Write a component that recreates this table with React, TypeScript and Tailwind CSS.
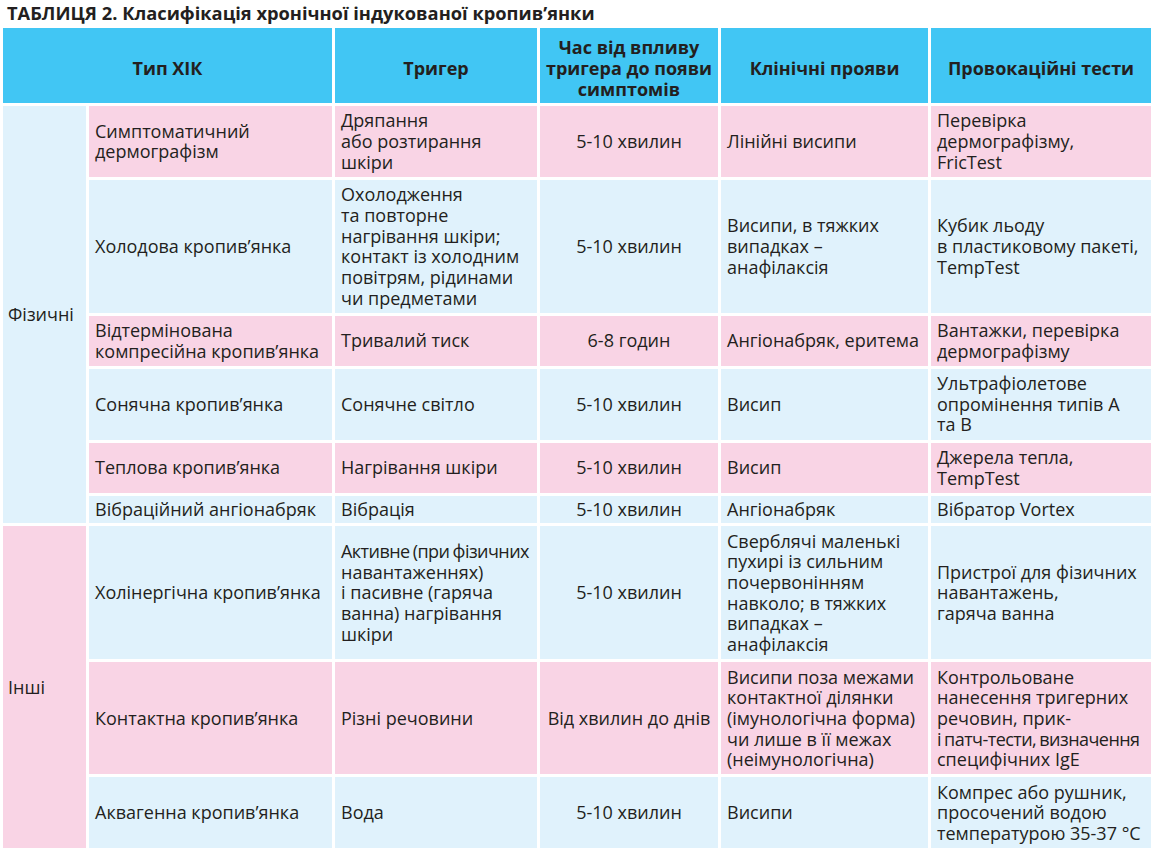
import React from "react";

type Row = { bg: "pink" | "blue"; cells: string[]; tight?: boolean };

const rows: Row[] = [
  { bg: "pink", cells: ["Симптоматичний\nдермографізм", "Дряпання\nабо розтирання\nшкіри", "5-10 хвилин", "Лінійні висипи", "Перевірка\nдермографізму,\nFricTest"] },
  { bg: "blue", cells: ["Холодова кропив’янка", "Охолодження\nта повторне\nнагрівання шкіри;\nконтакт із холодним\nповітрям, рідинами\nчи предметами", "5-10 хвилин", "Висипи, в тяжких\nвипадках –\nанафілаксія", "Кубик льоду\nв пластиковому пакеті,\nTempTest"] },
  { bg: "pink", cells: ["Відтермінована\nкомпресійна кропив’янка", "Тривалий тиск", "6-8 годин", "Ангіонабряк, еритема", "Вантажки, перевірка\nдермографізму"] },
  { bg: "blue", cells: ["Сонячна кропив’янка", "Сонячне світло", "5-10 хвилин", "Висип", "Ультрафіолетове\nопромінення типів А\nта В"] },
  { bg: "pink", cells: ["Теплова кропив’янка", "Нагрівання шкіри", "5-10 хвилин", "Висип", "Джерела тепла,\nTempTest"] },
  { bg: "blue", tight: true, cells: ["Вібраційний ангіонабряк", "Вібрація", "5-10 хвилин", "Ангіонабряк", "Вібратор Vortex"] },
  { bg: "blue", cells: ["Холінергічна кропив’янка", "^Активне (при фізичних\nнавантаженнях)\nі пасивне (гаряча\nванна) нагрівання\nшкіри", "5-10 хвилин", "Сверблячі маленькі\nпухирі із сильним\nпочервонінням\nнавколо; в тяжких\nвипадках –\nанафілаксія", "Пристрої для фізичних\nнавантажень,\nгаряча ванна"] },
  { bg: "pink", cells: ["Контактна кропив’янка", "Різні речовини", "Від хвилин до днів", "Висипи поза межами\nконтактної ділянки\n(імунологічна форма)\nчи лише в її межах\n(неімунологічна)", "Контрольоване\nнанесення тригерних\nречовин, прик-\n^і патч-тести, визначення\nспецифічних IgE"] },
  { bg: "blue", cells: ["Аквагенна кропив’янка", "Вода", "5-10 хвилин", "Висипи", "Компрес або рушник,\nпросочений водою\nтемпературою 35-37 °C"] },
];

const colStart = ["col-start-2", "col-start-3", "col-start-4", "col-start-5", "col-start-6"];

function Lines({ text }: { text: string }) {
  return (
    <div>
      {text.split("\n").map((l, i) =>
        l.startsWith("^") ? (
          <div key={i} className="tracking-[-0.55px] [word-spacing:-1px]">{l.slice(1)}</div>
        ) : (
          <div key={i}>{l}</div>
        )
      )}
    </div>
  );
}

export default function App() {
  return (
    <div
      className="w-[1151px] h-[853px] overflow-hidden bg-white text-[#231f20]"
      style={{ fontFamily: "'Open Sans', 'Noto Sans', sans-serif" }}
    >
      <div className="h-[28px] pl-[7px] pt-[1px] text-[18.3px] leading-[24px] font-bold">
        ТАБЛИЦЯ 2. Класифікація хронічної індукованої кропив’янки
      </div>
      <div className="grid grid-cols-[83px_243px_202px_178px_207px_220px] gap-[3px] pl-[3px] text-[18px] leading-[20.67px]">
        <div className="col-span-2 h-[75px] pt-[6px] bg-[#41c6f4] font-bold flex items-center justify-center text-center">Тип ХІК</div>
        <div className="bg-[#41c6f4] pt-[6px] font-bold flex items-center justify-center text-center">Тригер</div>
        <div className="bg-[#41c6f4] pt-[6px] font-bold flex items-center justify-center text-center whitespace-pre">{"Час від впливу\nтригера до появи\nсимптомів"}</div>
        <div className="bg-[#41c6f4] pt-[6px] font-bold flex items-center justify-center text-center">Клінічні прояви</div>
        <div className="bg-[#41c6f4] pt-[6px] font-bold flex items-center justify-center text-center">Провокаційні тести</div>

        <div className="col-start-1 row-start-2 row-span-6 bg-[#e0f2fc] flex items-center pl-[5px]">Фізичні</div>
        <div className="col-start-1 row-start-8 row-span-3 bg-[#f9d4e5] flex items-center pl-[5px]">Інші</div>

        {rows.map((r, ri) =>
          r.cells.map((c, ci) => (
            <div
              key={`${ri}-${ci}`}
              className={`${colStart[ci]} ${r.bg === "pink" ? "bg-[#f9d4e5]" : "bg-[#e0f2fc]"} flex items-center ${
                r.tight ? "py-[3.5px]" : "py-[4.4px]"
              } whitespace-pre ${ci === 2 ? "justify-center text-center" : "pl-[6px]"}`}
              style={{ gridRowStart: ri + 2 }}
            >
              <Lines text={c} />
            </div>
          ))
        )}
      </div>
    </div>
  );
}
